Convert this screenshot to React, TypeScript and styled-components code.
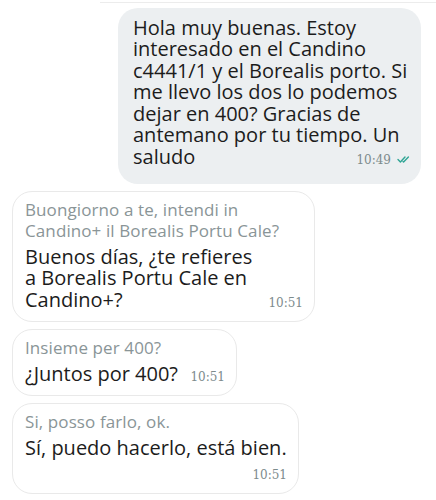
import styled, { createGlobalStyle } from 'styled-components';

const GlobalStyle = createGlobalStyle`
  html, body {
    margin: 0;
    padding: 0;
    background: #ffffff;
    overflow: hidden;
  }
`;

type Received = {
  original: string[];
  translated: string[];
  time: string;
  width: number;
  inlineTime?: boolean;
};

const received: Received[] = [
  {
    original: ['Buongiorno a te, intendi in', 'Candino+ il Borealis Portu Cale?'],
    translated: ['Buenos días, ¿te refieres', 'a Borealis Portu Cale en', 'Candino+?'],
    time: '10:51',
    width: 303,
  },
  {
    original: ['Insieme per 400?'],
    translated: ['¿Juntos por 400?'],
    time: '10:51',
    width: 225,
    inlineTime: true,
  },
  {
    original: ['Si, posso farlo, ok.'],
    translated: ['Sí, puedo hacerlo, está bien.'],
    time: '10:51',
    width: 287,
  },
];

const sentLines = [
  'Hola muy buenas. Estoy',
  'interesado en el Candino',
  'c4441/1 y el Borealis porto. Si',
  'me llevo los dos lo podemos',
  'dejar en 400? Gracias de',
  'antemano por tu tiempo. Un',
];

function DoubleTick() {
  return (
    <svg width='15' height='9' viewBox='0 0 15 9' fill='none'>
      <path d='M1 4.6 L3.4 7 L8 2' stroke='#2fa595' strokeWidth='1.4' strokeLinecap='round' strokeLinejoin='round' />
      <path d='M6 6.4 L6.6 7 L11.4 2' stroke='#2fa595' strokeWidth='1.4' strokeLinecap='round' strokeLinejoin='round' />
    </svg>
  );
}

export default function App() {
  return (
    <>
      <GlobalStyle />
      <Chat>
        <PrevEdge />
        <SentBubble>
          {sentLines.map(l => (
            <Line key={l}>{l}</Line>
          ))}
          <LastRow>
            <Line>saludo</Line>
            <Meta>
              <Time>10:49</Time>
              <DoubleTick />
            </Meta>
          </LastRow>
        </SentBubble>
        {received.map((m, i) => {
          const last = m.translated.length - 1;
          return (
            <ReceivedBubble key={i} $width={m.width}>
              <Originals>
                {m.original.map(l => (
                  <Original key={l}>{l}</Original>
                ))}
              </Originals>
              {m.translated.map((l, j) =>
                j === last && (m.inlineTime || last > 0) ? (
                  <LastRow key={l}>
                    <Line>{l}</Line>
                    <Time>{m.time}</Time>
                  </LastRow>
                ) : (
                  <Line key={l}>{l}</Line>
                )
              )}
              {!m.inlineTime && last === 0 && (
                <TimeRow>
                  <Time>{m.time}</Time>
                </TimeRow>
              )}
            </ReceivedBubble>
          );
        })}
        <NextBubble $width={424} />
      </Chat>
    </>
  );
}

const Chat = styled.div`
  display: flex;
  flex-direction: column;
  gap: 7px;
  width: 436px;
  height: 500px;
  overflow: hidden;
  font-family: 'Open Sans', 'Noto Sans', sans-serif;
`;

const PrevEdge = styled.div`
  height: 2px;
  margin-left: 100px;
  margin-bottom: -2px;
  border-bottom: 1px solid #ececec;
  flex-shrink: 0;
`;

const SentBubble = styled.div`
  align-self: flex-end;
  margin-right: 15px;
  width: 303px;
  box-sizing: border-box;
  padding: 8.5px 9px 15px 15px;
  background: #eceff1;
  border-radius: 20px;
  flex-shrink: 0;
`;

const ReceivedBubble = styled.div<{ $width: number }>`
  align-self: flex-start;
  margin-left: 12px;
  width: ${p => p.$width}px;
  box-sizing: border-box;
  padding: 7px 11px 9px 12px;
  background: #ffffff;
  border: 1px solid #e9e9e9;
  border-radius: 20px;
  flex-shrink: 0;
`;

const NextBubble = styled(ReceivedBubble)`
  height: 40px;
`;

const Line = styled.div`
  font-size: 20px;
  line-height: 21.5px;
  color: #1c1c1c;
  white-space: nowrap;
`;

const Originals = styled.div`
  margin-bottom: 5px;
`;

const Original = styled.div`
  font-size: 17px;
  line-height: 21px;
  letter-spacing: 0.1px;
  color: #8a9597;
  white-space: nowrap;
`;

const LastRow = styled.div`
  display: flex;
  align-items: baseline;
  justify-content: space-between;
  gap: 10px;
`;

const TimeRow = styled.div`
  display: flex;
  justify-content: flex-end;
  margin-top: 8px;
  line-height: 18px;
`;

const Meta = styled.div`
  display: flex;
  align-items: center;
  gap: 6px;
`;

const Time = styled.span`
  font-family: 'DejaVu Serif', 'Liberation Serif', serif;
  font-size: 12px;
  line-height: 18px;
  color: #7d8b8d;
`;
